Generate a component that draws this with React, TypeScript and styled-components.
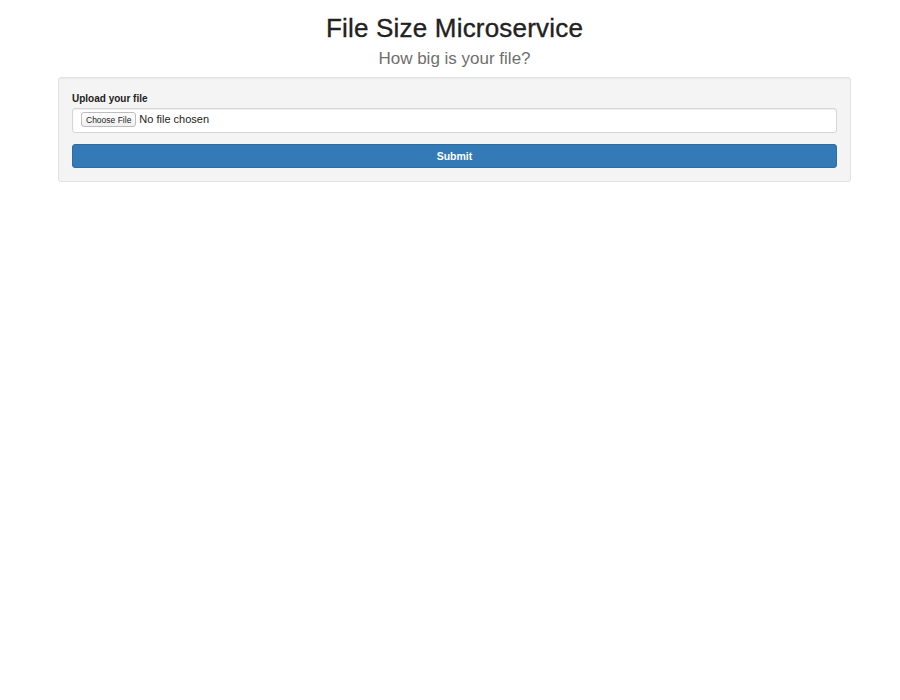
import styled, { createGlobalStyle } from "styled-components";

const GlobalStyle = createGlobalStyle`
  html, body {
    margin: 0;
    padding: 0;
    background: #fff;
    font-family: "Liberation Sans", Arial, sans-serif;
    color: #333;
  }
`;

const App = () => {
  return (
    <>
      <GlobalStyle />
      <Page>
        <Container>
          <Header>
            <Title>File Size Microservice</Title>
            <Subtitle>How big is your file?</Subtitle>
          </Header>
          <Well>
            <Form onSubmit={(e) => e.preventDefault()}>
              <FormGroup>
                <Label htmlFor="upload">Upload your file</Label>
                <FileInput id="upload" type="file" />
              </FormGroup>
              <SubmitButton type="submit">Submit</SubmitButton>
            </Form>
          </Well>
        </Container>
      </Page>
    </>
  );
};

const Page = styled.div`
  padding-left: 9px;
`;

const Container = styled.div`
  width: 793px;
  margin: 0 auto;
  padding-top: 12px;
`;

const Header = styled.div`
  text-align: center;
`;

const Title = styled.h1`
  margin: 0;
  font-size: 26px;
  line-height: 32px;
  font-weight: 400;
  letter-spacing: 0.2px;
  color: #222;
  -webkit-text-stroke: 0.35px #222;
`;

const Subtitle = styled.h3`
  margin: 4px 0 0;
  font-size: 17px;
  line-height: 22px;
  font-weight: 400;
  color: #6f6f6f;
`;

const Well = styled.div`
  margin-top: 7px;
  background: #f4f4f4;
  border: 1px solid #e3e3e3;
  border-radius: 3px;
  padding: 14px 13px 13px;
  box-shadow: inset 0 1px 1px rgba(0, 0, 0, 0.05);
`;

const Form = styled.form`
  display: flex;
  flex-direction: column;
  gap: 11px;
`;

const FormGroup = styled.div`
  display: flex;
  flex-direction: column;
  gap: 2px;
`;

const Label = styled.label`
  font-size: 10px;
  font-weight: bold;
  color: #222;
  line-height: 14px;
`;

const FileInput = styled.input`
  box-sizing: border-box;
  width: 100%;
  height: 25px;
  padding: 3px 8px;
  background: #fff;
  border: 1px solid #d6d6d6;
  border-radius: 3px;
  font-family: "Liberation Sans", Arial, sans-serif;
  font-size: 11px;
  color: #222;
  box-shadow: inset 0 1px 1px rgba(0, 0, 0, 0.075);

  &::file-selector-button {
    height: 15px;
    margin-right: 3px;
    padding: 0 4px;
    font-family: "Liberation Sans", Arial, sans-serif;
    font-size: 8.5px;
    color: #222;
    background: linear-gradient(#fefefe, #f0f0f0);
    border: 1px solid #bdbdbd;
    border-radius: 3px;
  }
`;

const SubmitButton = styled.button`
  height: 24px;
  width: 100%;
  background: #337ab7;
  border: 1px solid #2e6da4;
  border-radius: 3px;
  color: #fff;
  font-family: "Liberation Sans", Arial, sans-serif;
  font-size: 10.5px;
  font-weight: bold;
  cursor: pointer;
`;

export default App;
